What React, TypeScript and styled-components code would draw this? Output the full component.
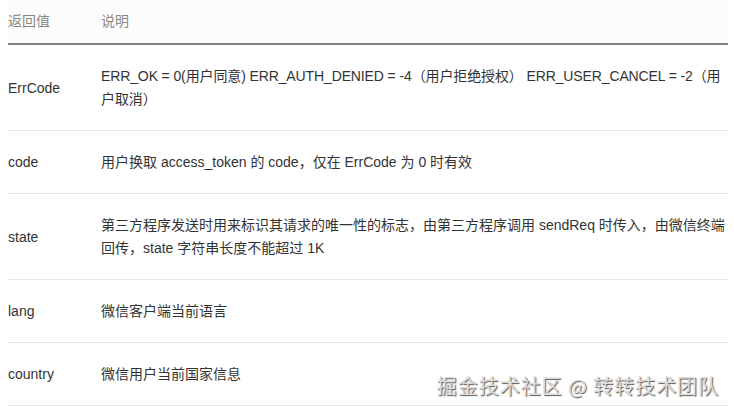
import React from "react";
import styled, { createGlobalStyle } from "styled-components";

const Global = createGlobalStyle`
  html, body { margin: 0; padding: 0; background: #fff; }
  body {
    font-family: "Liberation Sans", "Noto Sans CJK SC", sans-serif;
    -webkit-font-smoothing: antialiased;
  }
`;

const Page = styled.div`
  position: relative;
  width: 734px;
  height: 409px;
  overflow: hidden;
  padding: 0 6px 0 8px;
  box-sizing: border-box;
`;

const Table = styled.table`
  width: 720px;
  border-collapse: collapse;
  table-layout: fixed;
  font-size: 14px;
  line-height: 23px;
  color: #333;
`;

const HeadCell = styled.th<{ $w?: number }>`
  width: ${(p) => (p.$w ? `${p.$w}px` : "auto")};
  text-align: left;
  font-weight: normal;
  color: #888;
  background: #fcfcfc;
  padding: 10px 0;
  border-bottom: 2px solid #7f7f7f;
`;

const Row = styled.tr`
  border-bottom: 1px solid #e6e6e6;
`;

const Cell = styled.td<{ $tight?: boolean }>`
  padding: 20px 0 19px;
  vertical-align: middle;
  word-break: break-all;
  letter-spacing: ${(p) => (p.$tight ? "-0.12px" : "normal")};
`;

const Watermark = styled.div`
  position: absolute;
  right: 15px;
  bottom: 11px;
  font-family: "Noto Sans CJK SC", sans-serif;
  font-size: 20px;
  line-height: 24px;
  color: #dcdcdc;
  text-shadow: 1px 1px 1px #555, -0.5px -0.5px 0 #fff;
  letter-spacing: 0.95px;
`;

const rows: { k: string; v: string; tight?: boolean }[] = [
  {
    k: "ErrCode",
    v: "ERR_OK = 0(用户同意) ERR_AUTH_DENIED = -4（用户拒绝授权） ERR_USER_CANCEL = -2（用户取消）",
    tight: true,
  },
  { k: "code", v: "用户换取 access_token 的 code，仅在 ErrCode 为 0 时有效" },
  {
    k: "state",
    v: "第三方程序发送时用来标识其请求的唯一性的标志，由第三方程序调用 sendReq 时传入，由微信终端回传，state 字符串长度不能超过 1K",
  },
  { k: "lang", v: "微信客户端当前语言" },
  { k: "country", v: "微信用户当前国家信息" },
];

export default function App() {
  return (
    <Page>
      <Global />
      <Table>
        <thead>
          <tr>
            <HeadCell $w={93}>返回值</HeadCell>
            <HeadCell>说明</HeadCell>
          </tr>
        </thead>
        <tbody>
          {rows.map((r) => (
            <Row key={r.k}>
              <Cell>{r.k}</Cell>
              <Cell $tight={r.tight}>{r.v}</Cell>
            </Row>
          ))}
        </tbody>
      </Table>
      <Watermark>掘金技术社区 @ 转转技术团队</Watermark>
    </Page>
  );
}
